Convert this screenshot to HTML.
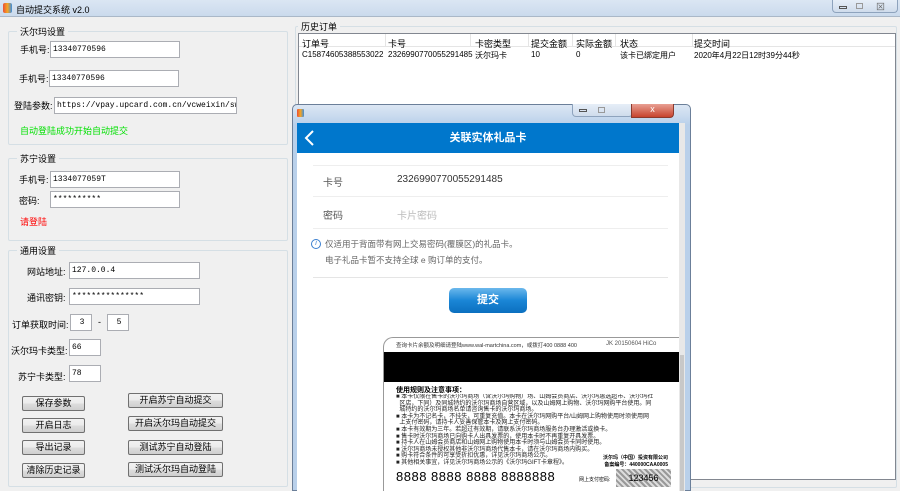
<!DOCTYPE html>
<html><head><meta charset="utf-8">
<style>
*{margin:0;padding:0;box-sizing:border-box}
body{width:900px;height:491px;overflow:hidden;background:#f0f0f0;font-family:"Liberation Sans","Noto Sans CJK SC","WenQuanYi Zen Hei",sans-serif;font-size:9px;color:#000;position:relative}
.a{position:absolute}
.grp{position:absolute;border:1px solid #d5dfe5;border-radius:2px}
.gl{position:absolute;top:-7px;left:8px;background:#f0f0f0;padding:0 3px;font-size:9px}
.inp{position:absolute;background:#fff;border:1px solid #abadb3;height:17px;font-size:8px;line-height:15px;padding-left:2px;font-family:"Liberation Mono","Noto Sans CJK SC",monospace;white-space:nowrap;overflow:hidden}
.btn{position:absolute;border:1px solid #707070;border-radius:2px;background:linear-gradient(#f2f2f2,#ebebeb 50%,#dddddd 51%,#cfcfcf);height:15px;text-align:center;line-height:13px;font-size:9px}
.lb{position:absolute;font-size:9px}
.th{position:absolute;top:37px;font-size:9px}
.td{position:absolute;top:50px;font-size:8px}
</style></head><body>
<div class="a" style="left:0;top:0;width:900px;height:17px;background:linear-gradient(#dbe6f3,#c9d9ec)"></div>
<div class="a" style="left:3px;top:3px;width:9px;height:10px;background:linear-gradient(90deg,#e8503a,#f5a623,#3b8de0);border-radius:2px"></div>
<div class="a" style="left:16px;top:3px;font-size:9px">自动提交系统 v2.0</div>
<div class="a" style="left:832px;top:0;width:66px;height:13px;border:1px solid #8ea3bd;border-top:none;border-radius:0 0 4px 4px;background:linear-gradient(#e6eef8,#cfdcec)"></div>
<div class="a" style="left:839px;top:6px;width:8px;height:3px;border:1px solid #555"></div>
<div class="a" style="left:856px;top:3px;width:7px;height:6px;border:1px solid #999"></div>
<div class="a" style="left:876px;top:0px;font-size:9px;color:#666">⊠</div>
<div class="a" style="left:0;top:16px;width:900px;height:1px;background:#aab8c8"></div>

<div class="grp" style="left:8px;top:31px;width:280px;height:114px"><div class="gl">沃尔玛设置</div></div>
<div class="lb" style="left:20px;top:43px">手机号:</div><div class="inp" style="left:50px;top:41px;width:130px">13340770596</div>
<div class="lb" style="left:19px;top:72px">手机号:</div><div class="inp" style="left:49px;top:70px;width:130px">13340770596</div>
<div class="lb" style="left:14px;top:99px">登陆参数:</div><div class="inp" style="left:54px;top:97px;width:183px">https://vpay.upcard.com.cn/vcweixin/swalm/togo</div>
<div class="lb" style="left:20px;top:124px;color:#00e000">自动登陆成功开始自动提交</div>

<div class="grp" style="left:8px;top:158px;width:280px;height:83px"><div class="gl">苏宁设置</div></div>
<div class="lb" style="left:19px;top:173px">手机号:</div><div class="inp" style="left:50px;top:171px;width:130px">1334077059T</div>
<div class="lb" style="left:19px;top:194px">密码:</div><div class="inp" style="left:50px;top:191px;width:130px">**********</div>
<div class="lb" style="left:20px;top:215px;color:#f00">请登陆</div>

<div class="grp" style="left:8px;top:250px;width:280px;height:237px"><div class="gl">通用设置</div></div>
<div class="lb" style="left:27px;top:265px">网站地址:</div><div class="inp" style="left:69px;top:262px;width:131px">127.0.0.4</div>
<div class="lb" style="left:27px;top:291px">通讯密钥:</div><div class="inp" style="left:69px;top:288px;width:131px">***************</div>
<div class="lb" style="left:12px;top:318px">订单获取时间:</div>
<div class="inp" style="left:70px;top:314px;width:22px;text-align:center">3</div>
<div class="lb" style="left:98px;top:317px">-</div>
<div class="inp" style="left:107px;top:314px;width:22px;text-align:center">5</div>
<div class="lb" style="left:11px;top:344px">沃尔玛卡类型:</div><div class="inp" style="left:69px;top:339px;width:32px">66</div>
<div class="lb" style="left:18px;top:370px">苏宁卡类型:</div><div class="inp" style="left:69px;top:365px;width:32px">78</div>
<div class="btn" style="left:22px;top:396px;width:63px">保存参数</div>
<div class="btn" style="left:22px;top:418px;width:63px">开启日志</div>
<div class="btn" style="left:22px;top:440px;width:63px">导出记录</div>
<div class="btn" style="left:22px;top:463px;width:63px">清除历史记录</div>
<div class="btn" style="left:128px;top:393px;width:95px">开启苏宁自动提交</div>
<div class="btn" style="left:128px;top:416px;width:95px">开启沃尔玛自动提交</div>
<div class="btn" style="left:128px;top:440px;width:95px">测试苏宁自动登陆</div>
<div class="btn" style="left:128px;top:462px;width:95px">测试沃尔玛自动登陆</div>

<div class="grp" style="left:295px;top:26px;width:602px;height:462px"><div class="gl" style="left:2px">历史订单</div></div>
<div class="a" style="left:298px;top:33px;width:598px;height:447px;background:#fff;border:1px solid #828790"></div>
<div class="a" style="left:299px;top:34px;width:596px;height:13px;background:#fff;border-bottom:1px solid #e5e5e5"></div>
<div class="a" style="left:385px;top:34px;width:1px;height:13px;background:#e5e5e5"></div>
<div class="a" style="left:470px;top:34px;width:1px;height:13px;background:#e5e5e5"></div>
<div class="a" style="left:528px;top:34px;width:1px;height:13px;background:#e5e5e5"></div>
<div class="a" style="left:572px;top:34px;width:1px;height:13px;background:#e5e5e5"></div>
<div class="a" style="left:615px;top:34px;width:1px;height:13px;background:#e5e5e5"></div>
<div class="a" style="left:692px;top:34px;width:1px;height:13px;background:#e5e5e5"></div>
<div class="th" style="left:302px">订单号</div><div class="th" style="left:388px">卡号</div><div class="th" style="left:475px">卡密类型</div><div class="th" style="left:531px">提交金额</div><div class="th" style="left:576px">实际金额</div><div class="th" style="left:620px">状态</div><div class="th" style="left:694px">提交时间</div>
<div class="td" style="left:302px">C15874605388553022</div><div class="td" style="left:388px">2326990770055291485</div><div class="td" style="left:475px">沃尔玛卡</div><div class="td" style="left:531px">10</div><div class="td" style="left:576px">0</div><div class="td" style="left:620px">该卡已绑定用户</div><div class="td" style="left:694px">2020年4月22日12时39分44秒</div>

<div class="a" style="left:292px;top:104px;width:399px;height:387px;background:linear-gradient(#dce7f4,#b9d0ea 20px,#b9d0ea);border:1px solid #6b7f99;border-radius:5px 5px 0 0"></div>
<div class="a" style="left:297px;top:109px;width:7px;height:8px;background:linear-gradient(90deg,#e8503a,#f5a623,#3b8de0);border-radius:1px"></div>
<div class="a" style="left:572px;top:104px;width:61px;height:13px;border:1px solid #8ea3bd;border-top:none;border-radius:0 0 4px 4px;background:linear-gradient(#e6eef8,#cfdcec)"></div>
<div class="a" style="left:579px;top:109px;width:8px;height:3px;border:1px solid #555"></div>
<div class="a" style="left:598px;top:107px;width:7px;height:6px;border:1px solid #999"></div>
<div class="a" style="left:631px;top:104px;width:43px;height:14px;background:linear-gradient(#e8a093,#c7432e);border:1px solid #8b3a2e;border-top:none;border-radius:0 0 4px 0;color:#fff;font-size:9px;text-align:center;line-height:11px">x</div>
<div class="a" style="left:297px;top:123px;width:382px;height:368px;background:#fff"></div>
<div class="a" style="left:679px;top:123px;width:6px;height:368px;background:#e8e8e8"></div>
<div class="a" style="left:680px;top:355px;width:4px;height:136px;background:#c8c8c8"></div>
<div class="a" style="left:297px;top:123px;width:382px;height:30px;background:#0077cc;color:#fff;font-size:11px;font-weight:bold;text-align:center;line-height:30px">关联实体礼品卡</div>
<svg class="a" style="left:303px;top:129px" width="14" height="18"><path d="M10 2 L3 9 L10 16" stroke="#fff" stroke-width="2" fill="none"/></svg>
<div class="a" style="left:313px;top:165px;width:355px;height:1px;background:#eee"></div>
<div class="a" style="left:323px;top:174px;font-size:10px;color:#555">卡号</div>
<div class="a" style="left:397px;top:174px;font-size:10px;color:#333">2326990770055291485</div>
<div class="a" style="left:313px;top:196px;width:355px;height:1px;background:#eee"></div>
<div class="a" style="left:323px;top:207px;font-size:10px;color:#555">密码</div>
<div class="a" style="left:397px;top:207px;font-size:10px;color:#bbb">卡片密码</div>
<div class="a" style="left:313px;top:228px;width:355px;height:1px;background:#eee"></div>
<div class="a" style="left:311px;top:239px;width:10px;height:10px;border:1px solid #3a7fd0;border-radius:50%;color:#3a7fd0;font-size:7px;text-align:center;line-height:8px;font-style:italic">i</div>
<div class="a" style="left:325px;top:238px;font-size:8.5px;color:#666">仅适用于背面带有网上交易密码(覆膜区)的礼品卡。</div>
<div class="a" style="left:325px;top:254px;font-size:8.5px;color:#666">电子礼品卡暂不支持全球 e 购订单的支付。</div>
<div class="a" style="left:313px;top:277px;width:355px;height:1px;background:#e5e5e5"></div>
<div class="a" style="left:449px;top:288px;width:78px;height:25px;border-radius:5px;background:linear-gradient(#6bb8ec,#1a86d6 50%,#0b6fbf);color:#fff;font-size:11px;font-weight:bold;text-align:center;line-height:25px">提交</div>
<div class="a" style="left:383px;top:337px;width:296px;height:154px;border:1px solid #999;border-right:none;border-bottom:none;border-radius:10px 0 0 0;background:#fff;overflow:hidden">
<div class="a" style="left:12px;top:3px;font-size:5.5px;color:#333;white-space:nowrap">查询卡片余额及明细请登陆www.wal-martchina.com，或拨打400 0888 400</div>
<div class="a" style="left:222px;top:3px;font-size:6px;color:#555;white-space:nowrap">JK 20150604 HiCo</div>
<div class="a" style="left:0;top:14px;width:296px;height:30px;background:#000"></div>
<div class="a" style="left:12px;top:47px;font-size:7px;font-weight:bold">使用规则及注意事项：</div>
<div class="a" style="left:12px;top:56px;width:272px;font-size:6px;line-height:6.6px;color:#222;white-space:nowrap;overflow:hidden">■ 本卡仅限在售卡的沃尔玛商场（含沃尔玛购物广场、山姆会员商店、沃尔玛惠选超市、沃尔玛社<br>&nbsp;&nbsp;区店，下同）及同城特约的沃尔玛商场自营区域，以及山姆网上购物、沃尔玛网购平台使用。同<br>&nbsp;&nbsp;城特约的沃尔玛商场名单请咨询售卡的沃尔玛商场。<br>■ 本卡为不记名卡，不挂失，可重复充值。本卡在沃尔玛网购平台/山姆网上购物使用时须使用网<br>&nbsp;&nbsp;上支付密码，请持卡人妥善保管本卡及网上支付密码。<br>■ 本卡有效期为三年。若超过有效期，请联系沃尔玛商场服务台办理激活或换卡。<br>■ 售卡时沃尔玛商场已向购卡人出具发票的，使用本卡时不再重复开具发票。<br>■ 持卡人在山姆会员商店和山姆网上购物使用本卡时须与山姆会员卡同时使用。<br>■ 沃尔玛商场未授权其他非沃尔玛商场代售本卡，请在沃尔玛商场内购买。<br>■ 购卡符合条件的可享受折扣优惠，详见沃尔玛商场公示。<br>■ 其他相关事宜，详见沃尔玛商场公示的《沃尔玛GIFT卡章程》。</div>
<div class="a" style="left:188px;top:116px;font-size:5px;font-weight:bold;text-align:right;width:96px">沃尔玛（中国）投资有限公司<br>备案编号：440000CAA0005</div>
<div class="a" style="left:12px;top:131px;font-size:13px;letter-spacing:0.5px;white-space:nowrap">8888 8888 8888 8888888</div>
<div class="a" style="left:195px;top:138px;font-size:5px">网上支付密码:</div>
<div class="a" style="left:232px;top:131px;width:55px;height:18px;background:repeating-linear-gradient(45deg,#999 0 2px,#ddd 2px 4px);font-size:9px;text-align:center;line-height:18px">123456</div>
</div>
</body></html>
